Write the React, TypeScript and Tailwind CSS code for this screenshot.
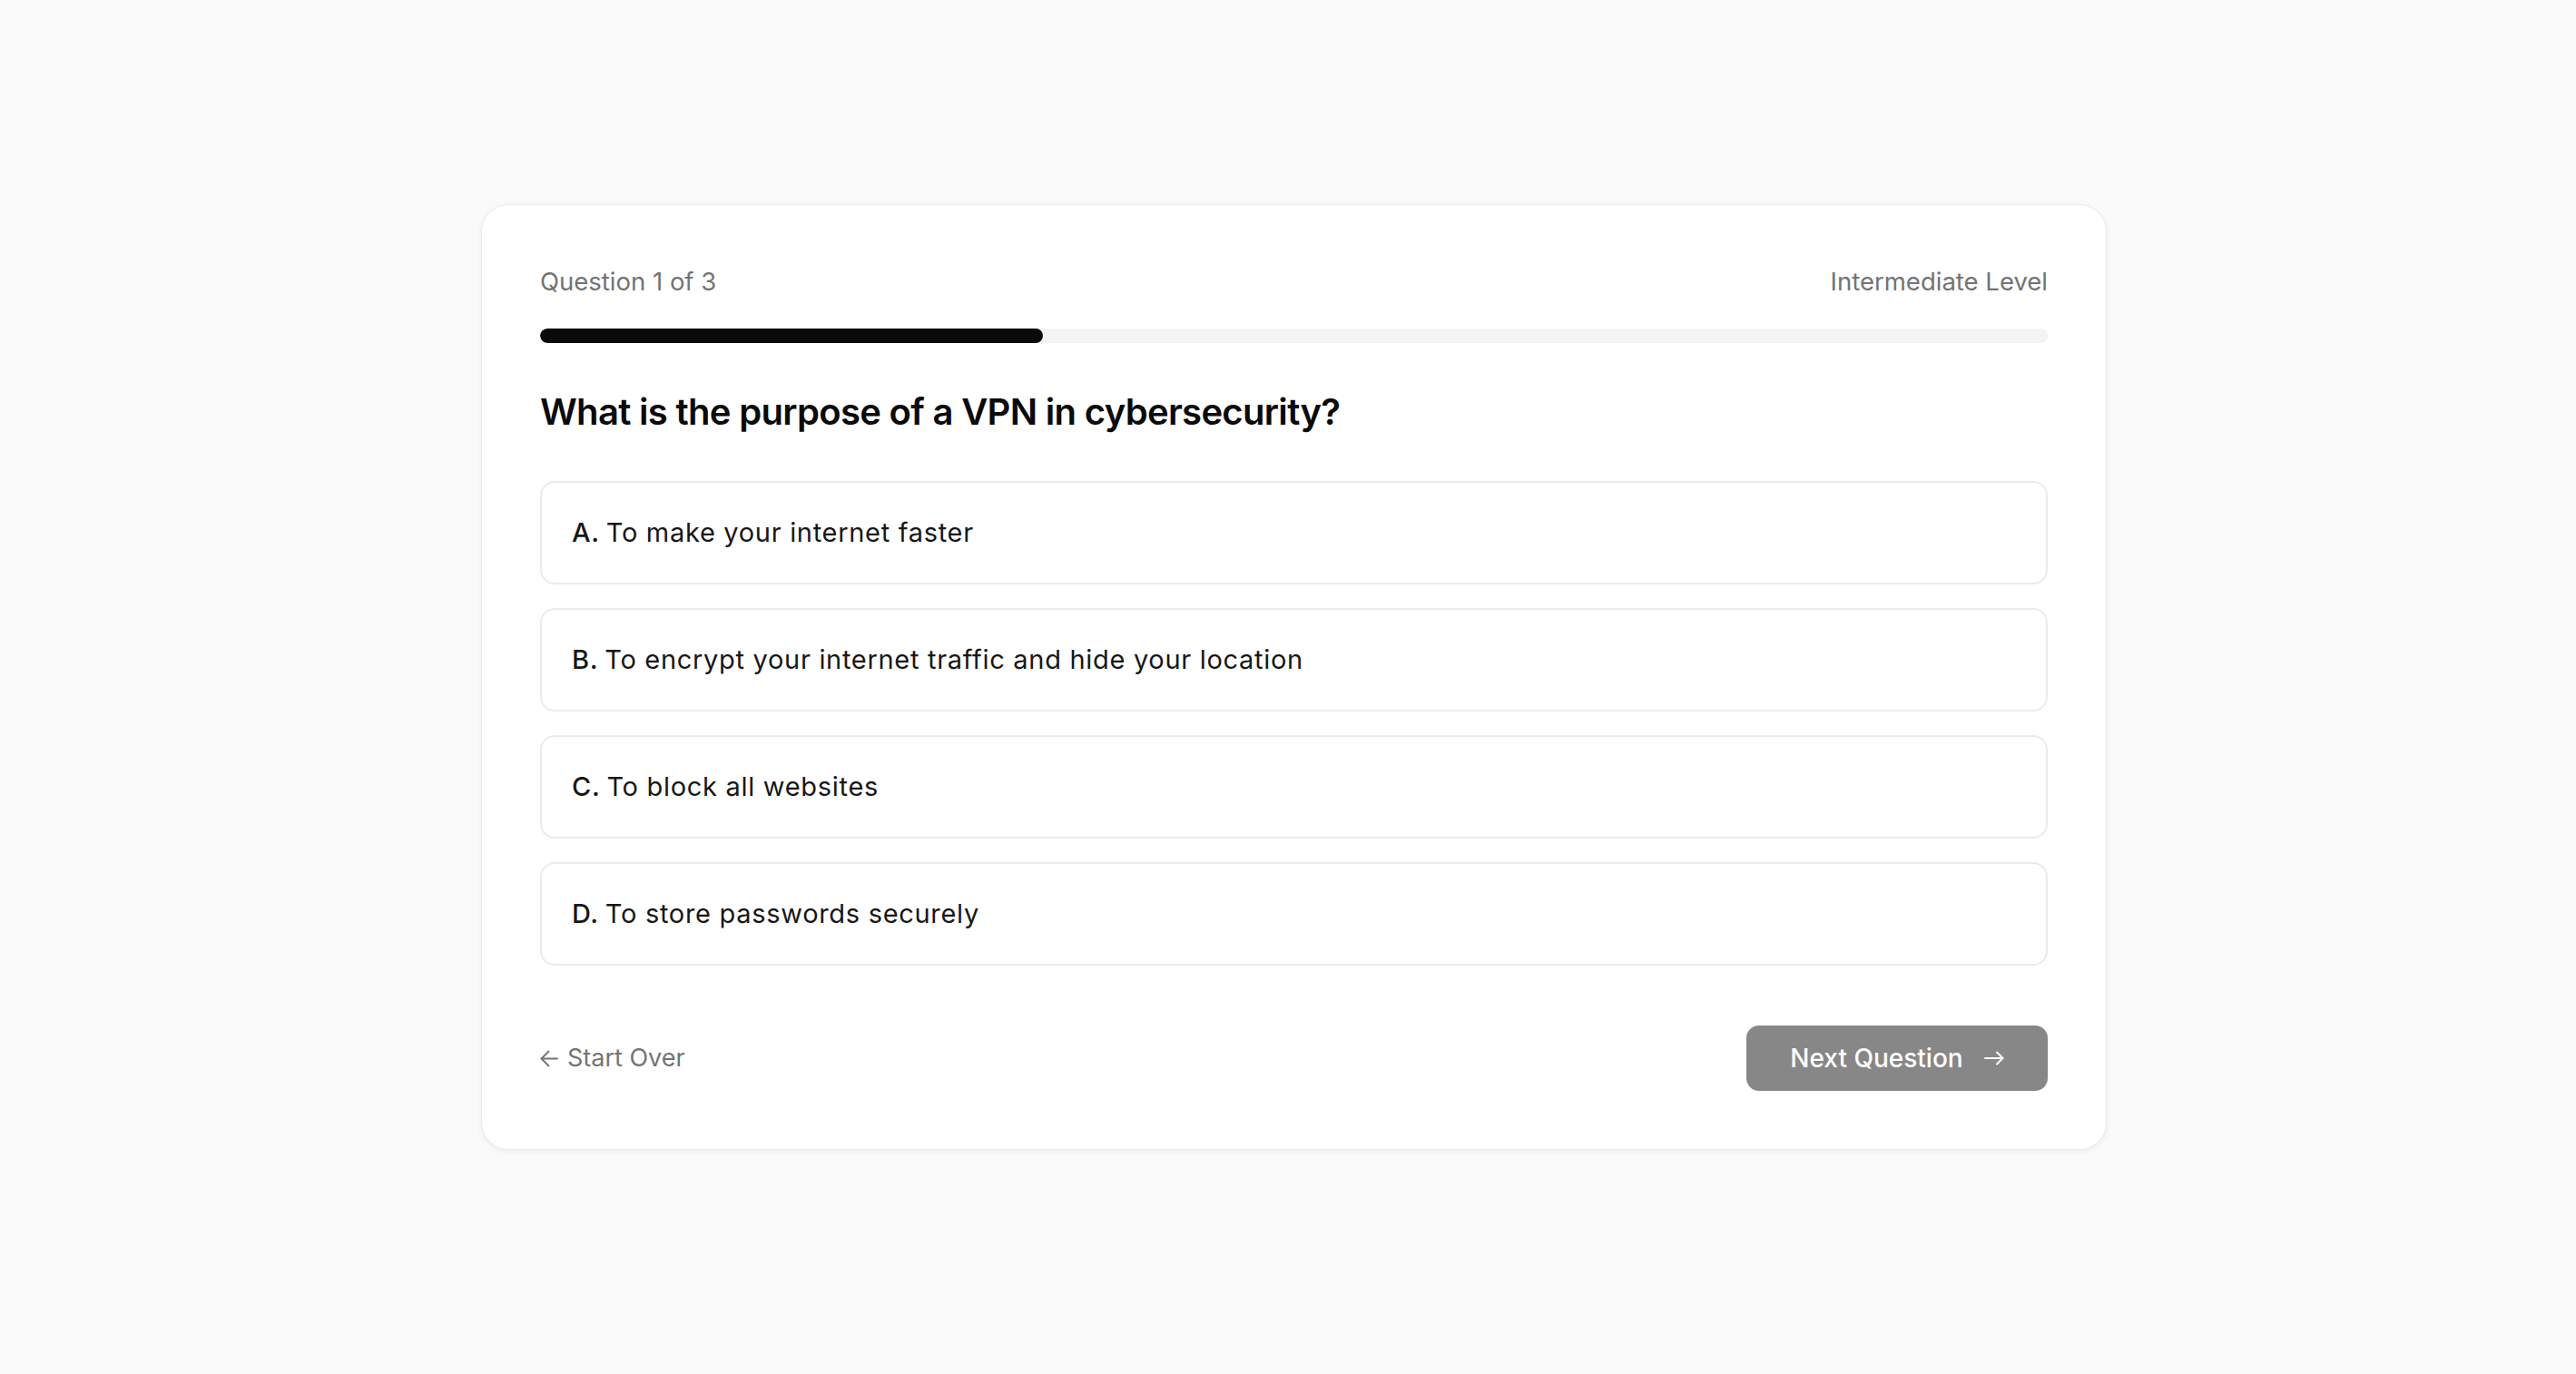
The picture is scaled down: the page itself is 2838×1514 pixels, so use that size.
import React from "react";

interface Option {
  letter: string;
  text: string;
}

const options: Option[] = [
  { letter: "A.", text: "To make your internet faster" },
  { letter: "B.", text: "To encrypt your internet traffic and hide your location" },
  { letter: "C.", text: "To block all websites" },
  { letter: "D.", text: "To store passwords securely" },
];

const ArrowLeft = () => (
  <svg width="20" height="19" viewBox="0 0 20 19" fill="none" stroke="currentColor" strokeWidth="1.8" strokeLinecap="round" strokeLinejoin="round">
    <path d="M19 9.5H1.5" />
    <path d="M9.5 1.5 1.5 9.5l8 8" />
  </svg>
);

const ArrowRight = () => (
  <svg width="22" height="16" viewBox="0 0 22 16" fill="none" stroke="currentColor" strokeWidth="2" strokeLinecap="round" strokeLinejoin="round">
    <path d="M1 8h19.5" />
    <path d="M14 1.5 20.5 8 14 14.5" />
  </svg>
);

const App: React.FC = () => {
  const progress = 1 / 3;

  return (
    <div
      className="min-h-screen w-full bg-[#fafafa] flex justify-center items-start pt-[225px] pl-[13px]"
      style={{ fontFamily: "Inter, 'Noto Sans', sans-serif" }}
    >
      <div className="w-[1791px] bg-white border border-[#ececec] rounded-[30px] shadow-[0_2px_6px_rgba(0,0,0,0.06)] p-16">
        {/* header */}
        <div className="flex justify-between items-center text-[27.5px] leading-[40px] text-[#737373]">
          <span>Question 1 of 3</span>
          <span>Intermediate Level</span>
        </div>

        <div className="mt-8 h-4 w-full rounded-full bg-[#f4f4f4] overflow-hidden">
          <div className="h-full rounded-full bg-[#0a0a0a]" style={{ width: `${progress * 100}%` }} />
        </div>

        <h1 className="mt-12 text-[40px] leading-[56px] font-semibold text-[#0a0a0a] tracking-[-0.017em]">
          What is the purpose of a VPN in cybersecurity?
        </h1>

        {/* options */}
        <div className="mt-12 flex flex-col gap-[26px]">
          {options.map((o) => (
            <button
              key={o.letter}
              className="h-[114px] w-full flex items-center px-[33px] border-2 border-[#ebebeb] rounded-2xl bg-white text-left text-[29px] text-[#171717] tracking-[0.024em]"
            >
              <span className="font-medium mr-[7px]">{o.letter}</span>
              <span>{o.text}</span>
            </button>
          ))}
        </div>

        {/* footer */}
        <div className="mt-[66px] flex justify-between items-center">
          <button className="flex items-center gap-[10px] text-[27px] text-[#737373]">
            <ArrowLeft />
            <span>Start Over</span>
          </button>
          <button className="h-[72px] w-[332px] flex items-center justify-center gap-[23px] rounded-[14px] bg-[#878787] text-white text-[28px] font-medium">
            <span>Next Question</span>
            <ArrowRight />
          </button>
        </div>
      </div>
    </div>
  );
};

export default App;
